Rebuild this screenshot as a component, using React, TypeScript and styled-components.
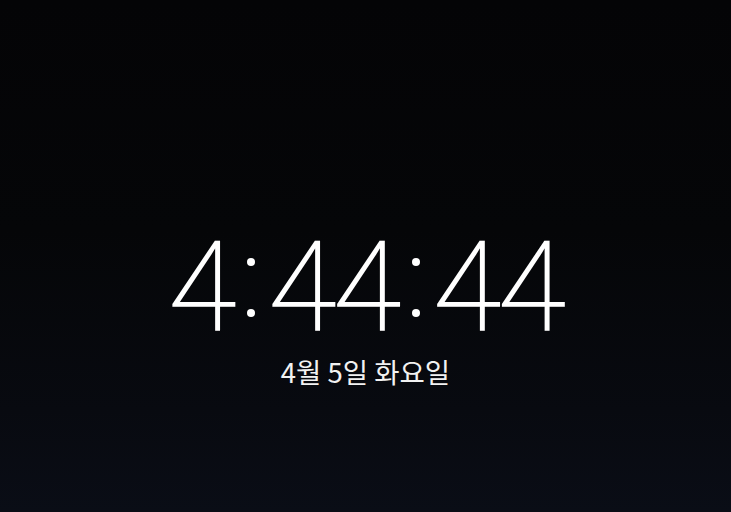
import React from 'react'
import styled, { createGlobalStyle } from 'styled-components'

const GlobalStyle = createGlobalStyle`
  html, body, #root {
    margin: 0;
    padding: 0;
    height: 100%;
  }
  body {
    background: #050507;
    overflow: hidden;
  }
`

const Screen = styled.div`
  height: 100%;
  display: flex;
  flex-direction: column;
  align-items: center;
  padding-top: 226px;
  box-sizing: border-box;
  background: linear-gradient(180deg, #040406 0%, #050608 45%, #080a10 80%, #0a0d16 100%);
  color: #fff;
`

const Clock = styled.div`
  display: flex;
  align-items: flex-start;
  height: 124px;
  font-family: Roboto, 'Noto Sans', sans-serif;
  font-weight: 100;
  font-size: 124px;
  line-height: 124px;
  letter-spacing: -3px;
  -webkit-text-stroke: 1.6px #fff;
  font-variant-numeric: tabular-nums;
`

const Digits = styled.span``

const Colon = styled.span`
  display: flex;
  flex-direction: column;
  justify-content: space-between;
  width: 8px;
  height: 59px;
  margin: 32px 13px 0 14px;

  &::before,
  &::after {
    content: '';
    display: block;
    width: 8px;
    height: 8px;
    border-radius: 50%;
    background: #fff;
  }
`

const DateLine = styled.div`
  margin-top: 4px;
  font-family: 'Noto Sans CJK KR', 'Noto Sans', sans-serif;
  font-weight: 400;
  font-size: 27.5px;
  line-height: 34px;
  color: #f2f2f2;
`

export default function App() {
  return (
    <>
      <GlobalStyle />
      <Screen>
        <Clock aria-label="4:44:44">
          <Digits>4</Digits>
          <Colon />
          <Digits>44</Digits>
          <Colon />
          <Digits>44</Digits>
        </Clock>
        <DateLine>4월 5일 화요일</DateLine>
      </Screen>
    </>
  )
}
